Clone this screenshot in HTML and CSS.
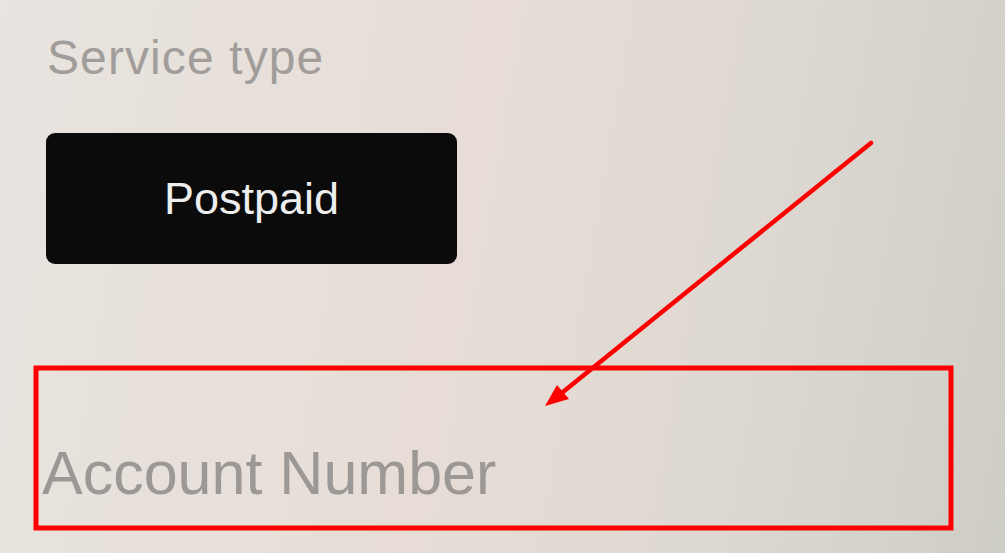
FILE: index.html
```html
<!DOCTYPE html>
<html lang="en">
<head>
  <meta charset="UTF-8">
  <title>Service type</title>
  <link rel="stylesheet" href="styles.css">
</head>
<body>
  <main class="form">
    <p class="label">Service type</p>
    <button class="type-btn" type="button">Postpaid</button>
    <p class="placeholder">Account Number</p>
  </main>

  <!-- annotation drawn over the screenshot -->
  <svg class="marks" width="1005" height="553" viewBox="0 0 1005 553">
    <rect x="36" y="368" width="915" height="160" fill="none" stroke="#ff0000" stroke-width="5"/>
    <line x1="871" y1="143" x2="558" y2="396" stroke="#ff0000" stroke-width="4.5" stroke-linecap="round"/>
    <polygon points="545,406 557,385 569,399" fill="#ff0000"/>
  </svg>
</body>
</html>
```

FILE: styles.css
```css
body {
  margin: 0;
  width: 1005px;
  height: 553px;
  overflow: hidden;
  font-family: 'Liberation Sans', Arial, sans-serif;
  background: linear-gradient(100deg, #e8e4df 0%, #e7ddd6 45%, #dcd8d1 75%, #cecdc5 100%);
}

.form {
  display: flex;
  flex-direction: column;
  align-items: flex-start;
  padding: 34px 0 0 47px;
}

.label {
  margin: 0;
  font-size: 48px;
  line-height: 48px;
  color: #a09d9a;
  letter-spacing: 1.1px;
}

.type-btn {
  margin-top: 51px;
  margin-left: -1px;
  width: 411px;
  height: 131px;
  background-color: #0b0b0b;
  color: #eeeeee;
  border: none;
  border-radius: 9px;
  font-family: inherit;
  font-size: 45px;
  padding: 0;
}

.placeholder {
  margin: 178px 0 0 -5px;
  font-size: 61px;
  line-height: 62px;
  color: #9b9895;
  filter: blur(0.6px);
}

.marks {
  position: absolute;
  top: 0;
  left: 0;
}
```
